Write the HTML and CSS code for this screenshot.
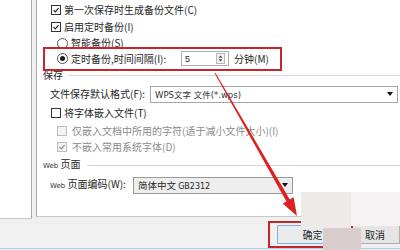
FILE: index.html
```html
<!DOCTYPE html>
<html>
<head>
<meta charset="utf-8">
<link rel="stylesheet" href="styles.css">
</head>
<body>
<div class="dialog">
  <div class="main">
    <div class="sidebar"></div>
    <div class="panel">
      <div class="row h16 ind-cb">
        <span class="cb"><svg viewBox="0 0 10 10"><path d="M2 5.2 L4.1 7.3 L8.2 2.6" /></svg></span>
        <span class="txt">第一次保存时生成备份文件(C)</span>
      </div>
      <div class="row h17 ind-cb">
        <span class="cb"><svg viewBox="0 0 10 10"><path d="M2 5.2 L4.1 7.3 L8.2 2.6" /></svg></span>
        <span class="txt">启用定时备份(I)</span>
      </div>
      <div class="row h16 ind-rb">
        <span class="rb"></span>
        <span class="txt">智能备份(S)</span>
      </div>
      <div class="row h15 ind-rb">
        <span class="rb on"><span class="dot"></span></span>
        <span class="txt lbl-spin">定时备份,时间间隔(I):</span>
        <span class="spin">
          <span class="val">5</span>
          <span class="spinbtn">
            <svg viewBox="0 0 9 12"><path d="M4.5 2 L7 5 L2 5 Z M4.5 10 L7 7 L2 7 Z" /></svg>
          </span>
        </span>
        <span class="txt unit">分钟(M)</span>
      </div>
      <div class="group h18">
        <span class="txt">保存</span>
        <span class="rule"></span>
      </div>
      <div class="row h20 ind-lbl">
        <span class="txt lbl-fmt">文件保存默认格式(F):</span>
        <span class="select sel-fmt"><span class="seltxt">WPS文字 文件(*.wps)</span><span class="arrow"></span></span>
      </div>
      <div class="row h18 ind-cb">
        <span class="cb off"></span>
        <span class="txt">将字体嵌入文件(T)</span>
      </div>
      <div class="row h18 ind-sub">
        <span class="cb dis off"></span>
        <span class="txt dim">仅嵌入文档中所用的字符(适于减小文件大小)(I)</span>
      </div>
      <div class="row h14 ind-sub">
        <span class="cb dis"><svg viewBox="0 0 10 10"><path d="M2 5.2 L4.1 7.3 L8.2 2.6" /></svg></span>
        <span class="txt dim">不嵌入常用系统字体(D)</span>
      </div>
      <div class="group h22">
        <span class="txt"><span class="web">Web</span> 页面</span>
        <span class="rule"></span>
      </div>
      <div class="row h18 ind-lbl">
        <span class="txt lbl-enc"><span class="web">Web</span> 页面编码(W):</span>
        <span class="select sel-enc"><span class="seltxt">简体中文 <span class="small">GB2312</span></span><span class="arrow"></span></span>
      </div>
    </div>
  </div>
  <div class="footer">
    <span class="btn ok">确定</span>
    <span class="btn cancel">取消</span>
  </div>
  <div class="bottomline"></div>
</div>

<div class="redbox box-interval"></div>
<div class="redbox box-ok"></div>
<div class="patch p1"></div>
<div class="patch p2"></div>
<div class="patch p3"></div>
<svg class="arrowsvg" viewBox="0 0 400 250" width="400" height="250">
  <polygon points="215.4,72.75 289.8,199.4 293.6,197.2 297,216 282.6,203.6 286.4,201.4 214.6,73.25" />
</svg>
</body>
</html>
```

FILE: styles.css
```css
html, body {
  margin: 0;
  padding: 0;
}
body {
  width: 400px;
  height: 250px;
  overflow: hidden;
  position: relative;
  background: #f0f0f0;
  font-family: "Noto Sans CJK SC", "Noto Sans", sans-serif;
  font-size: 10px;
  color: #262626;
}
.dialog {
  display: flex;
  flex-direction: column;
  width: 400px;
  height: 250px;
}
.main {
  display: flex;
  height: 220px;
  align-items: flex-start;
}
.sidebar {
  width: 31px;
  height: 218px;
  background: #fff;
  border-right: 1px solid #a8a8a8;
  border-bottom: 1px solid #c8c8c8;
}
.panel {
  margin-left: 4px;
  flex: 1;
  height: 214px;
  padding-top: 2px;
  background: #fff;
  border-left: 1px solid #a8a8a8;
  border-bottom: 1px solid #c8c8c8;
  display: flex;
  flex-direction: column;
}
.row {
  display: flex;
  align-items: center;
  white-space: nowrap;
}
.h14 { height: 14px; }
.h15 { height: 15px; }
.h16 { height: 16px; }
.h17 { height: 17px; }
.h18 { height: 18px; }
.h20 { height: 20px; }
.h22 { height: 22px; }
.ind-cb { padding-left: 14px; }
.ind-rb { padding-left: 20px; }
.ind-sub { padding-left: 20px; }
.ind-lbl { padding-left: 13px; }
.txt {
  line-height: 12px;
}
.dim { color: #8c8c8c; }
.cb {
  width: 10px;
  height: 10px;
  box-sizing: border-box;
  border: 1px solid #333;
  background: #fff;
  margin-right: 3px;
  display: flex;
  flex: none;
}
.cb svg {
  width: 8px;
  height: 8px;
  fill: none;
  stroke: #222;
  stroke-width: 1.5;
}
.cb.dis {
  border-color: #bdbdbd;
  background: #f3f3f3;
  margin-right: 5px;
}
.cb.dis svg { stroke: #8a8a8a; }
.rb {
  width: 11px;
  height: 11px;
  box-sizing: border-box;
  border: 1px solid #555;
  border-radius: 50%;
  background: #fff;
  margin-right: 3px;
  display: flex;
  align-items: center;
  justify-content: center;
  flex: none;
}
.rb .dot {
  width: 5px;
  height: 5px;
  border-radius: 50%;
  background: #1e1e1e;
}
.lbl-spin { width: 110px; }
.spin {
  width: 48px;
  height: 15px;
  box-sizing: border-box;
  border: 1px solid #abadb3;
  display: flex;
  align-items: center;
  justify-content: space-between;
  padding-left: 3px;
  padding-right: 2px;
}
.spin .val { font-family: "Liberation Sans", sans-serif; font-size: 9px; }
.spinbtn {
  width: 9px;
  height: 11px;
  box-sizing: border-box;
  border: 1px solid #b8b8b8;
  background: #f0f0f0;
  display: flex;
  margin-right: 1px;
}
.spinbtn svg { width: 7px; height: 9px; fill: #444; }
.unit { margin-left: 5px; }
.group {
  display: flex;
  align-items: center;
  padding-left: 6px;
}
.rule {
  flex: 1;
  height: 1px;
  background: #d5d5d5;
  margin-left: 6px;
}
.web {
  font-family: "DejaVu Sans", sans-serif;
  font-size: 7px;
  color: #333;
}
.lbl-fmt { width: 100px; }
.lbl-enc { width: 83px; }
.select {
  height: 17px;
  box-sizing: border-box;
  border: 1px solid #a6a6a6;
  display: flex;
  align-items: center;
  justify-content: space-between;
  padding: 0 4px 0 4px;
}
.sel-fmt { width: 248px; background: #fff; }
.sel-enc { width: 160px; background: #eeeeee; border-color: #9a9a9a; }
.seltxt { font-size: 9.5px; }
.sel-fmt .seltxt { font-family: "DejaVu Sans", "Noto Sans CJK SC", sans-serif; font-size: 8.5px; color: #333; }
.small { font-family: "DejaVu Sans", sans-serif; font-size: 8px; }
.arrow {
  width: 0;
  height: 0;
  border-left: 3.5px solid transparent;
  border-right: 3.5px solid transparent;
  border-top: 4px solid #111;
}
.footer {
  height: 28px;
  display: flex;
  align-items: center;
  justify-content: flex-end;
  gap: 4px;
  padding-top: 1px;
  box-sizing: border-box;
}
.btn {
  height: 19px;
  box-sizing: border-box;
  display: flex;
  align-items: center;
  justify-content: center;
  background: #e5e5e5;
  border: 1px solid #adadad;
}
.ok { width: 71px; border-color: #86b2d2; background: #e8ecee; }
.cancel { width: 48px; padding-right: 2px; }
.bottomline {
  height: 1px;
  background: #a9d4e6;
}
.redbox {
  position: absolute;
  box-sizing: border-box;
  border: 2px solid #c4262e;
}
.box-interval { left: 43px; top: 47px; width: 239px; height: 24px; }
.box-ok { left: 268px; top: 221px; width: 85px; height: 27px; }
.patch { position: absolute; }
.p1 { left: 301px; top: 192px; width: 50px; height: 36px; background: #eeeaea; }
.p2 { left: 351px; top: 192px; width: 49px; height: 34px; background: #f5f3f3; }
.p3 { left: 323px; top: 228px; width: 38px; height: 22px; background: #d9cdcd; }
.arrowsvg {
  position: absolute;
  left: 0;
  top: 0;
  fill: #dc2121;
}
```
